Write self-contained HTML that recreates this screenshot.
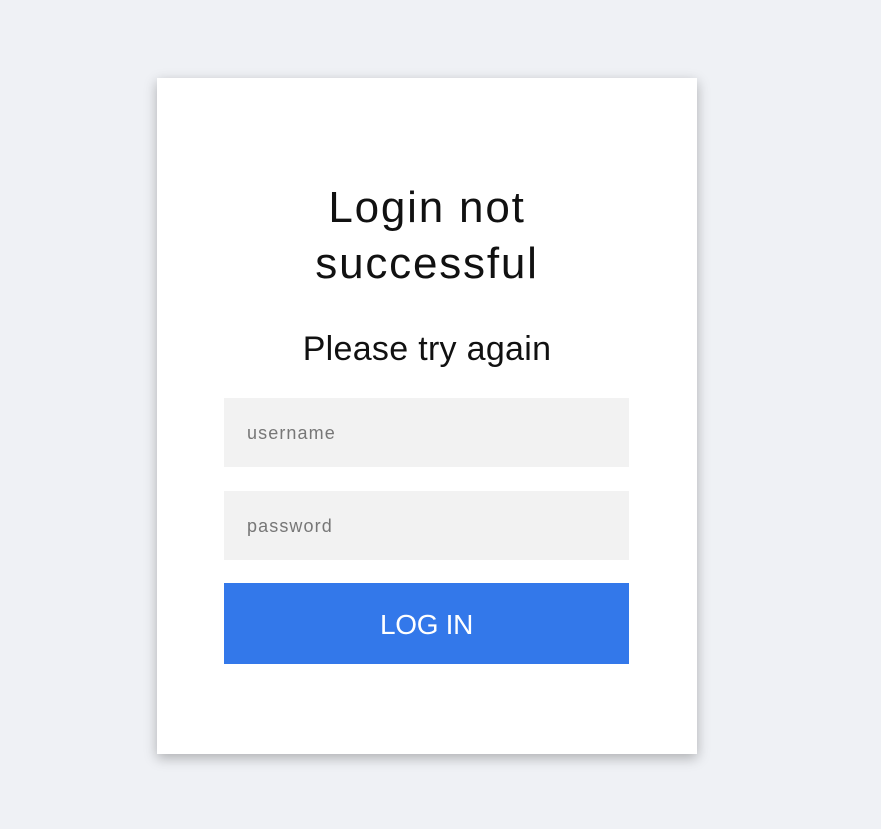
<!DOCTYPE html>
<html><head><style>
html,body{margin:0;padding:0;width:881px;height:829px;background:#eff1f5;font-family:"Liberation Sans",sans-serif;overflow:hidden}
.card{position:absolute;left:157px;top:78px;width:540px;height:676px;background:#fff;box-shadow:0 4px 12px rgba(0,0,0,0.28)}
h1{position:absolute;left:0;width:540px;top:102px;margin:0;text-align:center;font-weight:normal;font-size:44px;line-height:56px;color:#111;letter-spacing:1.8px}
h2{position:absolute;left:0;width:540px;top:251px;margin:0;text-align:center;font-weight:normal;font-size:34px;line-height:40px;color:#111;letter-spacing:0.3px}
.in{position:absolute;left:67px;width:405px;height:69px;background:#f2f2f2;color:#777;font-size:18px;line-height:71px;box-sizing:border-box;padding-left:23px;letter-spacing:1.1px}
.btn{position:absolute;left:67px;top:505px;width:405px;height:81px;background:#3378ea;color:#fff;font-size:28px;line-height:83px;text-align:center;letter-spacing:-0.3px}
</style></head><body>
<div class="card">
<h1>Login not<br>successful</h1>
<h2>Please try again</h2>
<div class="in" style="top:320px">username</div>
<div class="in" style="top:413px">password</div>
<div class="btn">LOG IN</div>
</div>
</body></html>
